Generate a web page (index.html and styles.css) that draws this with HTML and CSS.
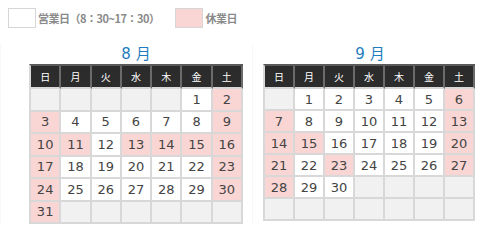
FILE: index.html
```html
<!DOCTYPE html>
<html lang="ja">
<head>
<meta charset="utf-8">
<link rel="stylesheet" href="styles.css">
</head>
<body>
<div class="legend">
  <span class="swatch swatch-open"></span><span class="legend-text">営業日（8：30~17：30）</span>
  <span class="swatch swatch-closed"></span><span class="legend-text">休業日</span>
</div>
<div class="calendars">
  <div class="cal cal-left">
    <div class="month">8 月</div>
    <table class="grid">
      <tr><th>日</th><th>月</th><th>火</th><th>水</th><th>木</th><th>金</th><th>土</th></tr>
      <tr><td class="e"></td><td class="e"></td><td class="e"></td><td class="e"></td><td class="e"></td><td>1</td><td class="h">2</td></tr>
      <tr><td class="h">3</td><td>4</td><td>5</td><td>6</td><td>7</td><td>8</td><td class="h">9</td></tr>
      <tr><td class="h">10</td><td class="h">11</td><td>12</td><td class="h">13</td><td class="h">14</td><td class="h">15</td><td class="h">16</td></tr>
      <tr><td class="h">17</td><td>18</td><td>19</td><td>20</td><td>21</td><td>22</td><td class="h">23</td></tr>
      <tr><td class="h">24</td><td>25</td><td>26</td><td>27</td><td>28</td><td>29</td><td class="h">30</td></tr>
      <tr><td class="h">31</td><td class="e"></td><td class="e"></td><td class="e"></td><td class="e"></td><td class="e"></td><td class="e"></td></tr>
    </table>
  </div>
  <div class="cal cal-right">
    <div class="month">9 月</div>
    <table class="grid">
      <tr><th>日</th><th>月</th><th>火</th><th>水</th><th>木</th><th>金</th><th>土</th></tr>
      <tr><td class="e"></td><td>1</td><td>2</td><td>3</td><td>4</td><td>5</td><td class="h">6</td></tr>
      <tr><td class="h">7</td><td>8</td><td>9</td><td>10</td><td>11</td><td>12</td><td class="h">13</td></tr>
      <tr><td class="h">14</td><td class="h">15</td><td>16</td><td>17</td><td>18</td><td>19</td><td class="h">20</td></tr>
      <tr><td class="h">21</td><td>22</td><td class="h">23</td><td>24</td><td>25</td><td>26</td><td class="h">27</td></tr>
      <tr><td class="h">28</td><td>29</td><td>30</td><td class="e"></td><td class="e"></td><td class="e"></td><td class="e"></td></tr>
      <tr><td class="e"></td><td class="e"></td><td class="e"></td><td class="e"></td><td class="e"></td><td class="e"></td><td class="e"></td></tr>
    </table>
  </div>
</div>
</body>
</html>
```
FILE: styles.css
```css
html, body {
  margin: 0;
  padding: 0;
  background: #ffffff;
}
body {
  width: 500px;
  height: 250px;
  font-family: "DejaVu Sans", "Noto Sans CJK JP", sans-serif;
  color: #444;
  overflow: hidden;
}
.legend {
  display: flex;
  align-items: center;
  padding: 8px 0 0 8px;
  height: 20px;
}
.swatch {
  width: 26px;
  height: 18px;
  border: 1px solid #d6d6d6;
  box-sizing: content-box;
}
.swatch-open { background: #ffffff; }
.swatch-closed { background: #f9d5d3; margin-left: 16px; }
.legend-text {
  font-family: "Noto Sans CJK JP", sans-serif;
  font-size: 11px;
  font-weight: 700;
  color: #8a8a8a;
  margin-left: 2px;
  letter-spacing: -0.5px;
}
.calendars {
  display: flex;
  margin-top: 15px;
}
.cal {
  display: flex;
  flex-direction: column;
  align-items: flex-start;
}
.cal-left {
  width: 252px;
  padding-left: 28px;
  box-sizing: border-box;
  border-left: 1px solid #f8f8f8;
}
.cal-right {
  padding-left: 10px;
  border-left: 1px solid #f8f8f8;
}
.month {
  width: 214px;
  text-align: center;
  font-size: 15px;
  line-height: 18px;
  color: #1f7dbd;
  height: 19px;
  padding-top: 2px;
}
.grid {
  width: 214px;
  border-collapse: separate;
  border-spacing: 0;
  table-layout: fixed;
  border-left: 2px solid #d8d8d8;
  border-top: 2px solid #5a5a5a;
}
.cal-right .grid { width: 212px; }
.grid th {
  background: #2c2c2c;
  color: #ffffff;
  font-family: "Noto Sans CJK JP", sans-serif;
  font-size: 10px;
  font-weight: 400;
  height: 21px;
  padding: 0;
  border-right: 2px solid #6b6b6b;
  border-bottom: 2px solid #d8d8d8;
}
.grid td {
  background: #ffffff;
  font-size: 13px;
  text-align: center;
  height: 20px;
  padding: 0;
  border-right: 2px solid #d8d8d8;
  border-bottom: 2px solid #d8d8d8;
  color: #444;
}
.cal-left .grid td { height: 20.5px; }
.grid td.h { background: #f9d5d3; }
.grid td.e { background: #f1f1f1; }
```
